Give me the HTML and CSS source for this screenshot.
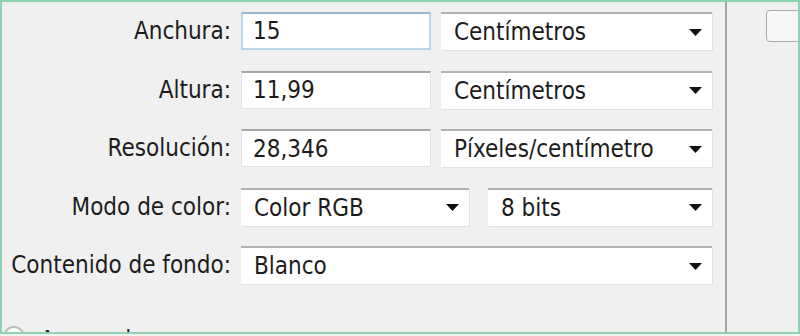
FILE: index.html
```html
<!DOCTYPE html>
<html lang="es">
<head>
<meta charset="utf-8">
<title>Nuevo documento</title>
<link rel="stylesheet" href="styles.css">
</head>
<body>
<div class="window">
  <div class="main">
    <div class="form">
      <div class="label">Anchura:</div>
      <div class="field">
        <div class="input focused w190">15</div>
        <div class="select w271"><span>Centímetros</span><svg class="arrow" width="13" height="7" viewBox="0 0 13 7"><path d="M0 0H13L6.5 7Z"/></svg></div>
      </div>
      <div class="label">Altura:</div>
      <div class="field">
        <div class="input w190">11,99</div>
        <div class="select w271"><span>Centímetros</span><svg class="arrow" width="13" height="7" viewBox="0 0 13 7"><path d="M0 0H13L6.5 7Z"/></svg></div>
      </div>
      <div class="label">Resolución:</div>
      <div class="field">
        <div class="input w190">28,346</div>
        <div class="select w271"><span>Píxeles/centímetro</span><svg class="arrow" width="13" height="7" viewBox="0 0 13 7"><path d="M0 0H13L6.5 7Z"/></svg></div>
      </div>
      <div class="label">Modo de color:</div>
      <div class="field wide-gap">
        <div class="select w228"><span>Color RGB</span><svg class="arrow" width="13" height="7" viewBox="0 0 13 7"><path d="M0 0H13L6.5 7Z"/></svg></div>
        <div class="select w224"><span>8 bits</span><svg class="arrow" width="13" height="7" viewBox="0 0 13 7"><path d="M0 0H13L6.5 7Z"/></svg></div>
      </div>
      <div class="label">Contenido de fondo:</div>
      <div class="field">
        <div class="select full"><span>Blanco</span><svg class="arrow" width="13" height="7" viewBox="0 0 13 7"><path d="M0 0H13L6.5 7Z"/></svg></div>
      </div>
    </div>
    <div class="advanced"><span class="radio"></span><span class="adv-text">Avanzado</span></div>
  </div>
  <div class="side">
    <div class="btn"></div>
  </div>
</div>
</body>
</html>
```

FILE: styles.css
```css
* { box-sizing: border-box; }
html, body { margin: 0; padding: 0; }
body {
  background: #eef3f0;
  font-family: "DejaVu Sans Condensed", "DejaVu Sans", "Liberation Sans", sans-serif;
  font-stretch: condensed;
  font-size: 24px;
  color: #1c1c1c;
}
.window {
  width: 800px;
  height: 334px;
  display: flex;
  background: #f0f0f0;
  border: 2px solid #8ed2b2;
  overflow: hidden;
}
.main {
  width: 725px;
  flex: none;
  border-right: 2px solid #a4a4a4;
  padding-top: 10px;
  overflow: hidden;
}
.form {
  display: grid;
  grid-template-columns: 229px 471px;
  grid-auto-rows: 38px;
  column-gap: 10px;
  row-gap: 20.5px;
}
.label {
  display: flex;
  align-items: center;
  justify-content: flex-end;
  white-space: nowrap;
}
.field {
  display: flex;
  gap: 10px;
}
.field.wide-gap { gap: 19px; }
.input, .select {
  height: 38px;
  background: #fff;
  display: flex;
  align-items: center;
  white-space: nowrap;
}
.input {
  padding-left: 11px;
  border: 1px solid #e4e4e4;
  border-top: 2px solid #a6a6a6;
}
.input.focused {
  border: 2px solid #b6d7ea;
  border-top-color: #93b5c9;
  padding-left: 10px;
}
.select {
  padding-left: 13px;
  padding-right: 10px;
  border-top: 2px solid #b2b2b2;
  justify-content: space-between;
  box-shadow: 1px 1px 0 #e2e2e2;
}
.arrow { fill: #111; flex: none; }
.w190 { width: 190px; }
.w271 { width: 271px; }
.w228 { width: 228px; }
.w224 { width: 224px; }
.full { width: 471px; }
.advanced {
  margin-top: 42px;
  display: flex;
  align-items: flex-start;
  gap: 15px;
  padding-left: 1px;
}
.radio {
  width: 22px;
  height: 22px;
  border-radius: 50%;
  border: 2px solid #bdbdbd;
  background: #fff;
  flex: none;
}
.adv-text { line-height: 1; margin-top: 2px; }
.side {
  flex: 1;
  padding-top: 8px;
  padding-left: 39px;
  overflow: hidden;
}
.btn {
  width: 60px;
  height: 32px;
  border: 1px solid #ababab;
  border-radius: 4px;
  background: #f6f6f6;
}
```
